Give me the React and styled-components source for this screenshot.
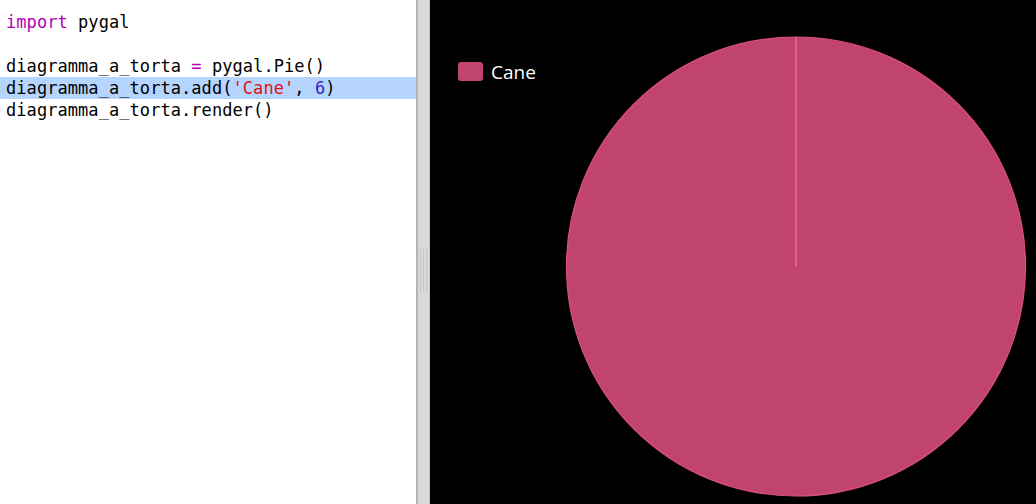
import React from "react";
import styled, { createGlobalStyle } from "styled-components";

const Global = createGlobalStyle`
  html, body { margin: 0; padding: 0; background: #fff; }
  body { width: 1036px; height: 504px; overflow: hidden; }
`;

const Layout = styled.div`
  display: flex;
  width: 1036px;
  height: 504px;
`;

const Editor = styled.div`
  width: 416px;
  flex: none;
  background: #fff;
  padding-top: 11px;
  box-sizing: border-box;
  font-family: "DejaVu Sans Mono", "Liberation Mono", monospace;
  font-size: 17px;
  letter-spacing: 0.06px;
  color: #000;
`;

const Line = styled.div`
  height: 22px;
  line-height: 22px;
  padding-left: 6px;
  white-space: pre;
  background: ${(p) => (p.$active ? "#b5d5ff" : "transparent")};
`;

const Kw = styled.span`color: #b400b4;`;
const Str = styled.span`color: #dd1111;`;
const Num = styled.span`color: #3a1fc0;`;

const Divider = styled.div`
  width: 14px;
  flex: none;
  box-sizing: border-box;
  background: #d9d9d9;
  border-left: 2px solid #b4b4b4;
  border-right: 1px solid #c4c4c4;
  display: flex;
  align-items: center;
  justify-content: center;
`;

const Grip = styled.div`
  width: 8px;
  height: 42px;
  margin-top: 36px;
  background: repeating-linear-gradient(
    to right,
    #c4c4c4 0px,
    #c4c4c4 1px,
    #d9d9d9 1px,
    #d9d9d9 3px
  );
`;

const Chart = styled.div`
  flex: 1;
  background: #000;
  display: flex;
`;

const ChartSvg = styled.svg`
  display: block;
  width: 606px;
  height: 504px;
`;

const LegendText = styled.text`
  font-family: "Open Sans", "DejaVu Sans", sans-serif;
  font-size: 19px;
  fill: #fff;
`;

export default function App() {
  const cx = 796 - 430;
  const cy = 266.5;
  const r = 229.5;
  return (
    <>
      <Global />
      <Layout>
        <Editor>
          <Line><Kw>import</Kw> pygal</Line>
          <Line> </Line>
          <Line>diagramma_a_torta <Kw>=</Kw> pygal.Pie()</Line>
          <Line $active>diagramma_a_torta.add(<Str>'Cane'</Str>, <Num>6</Num>)</Line>
          <Line>diagramma_a_torta.render()</Line>
        </Editor>
        <Divider>
          <Grip />
        </Divider>
        <Chart>
          <ChartSvg viewBox="0 0 606 504">
            <circle cx={cx} cy={cy} r={r} fill="#c0446f" stroke="#dd4e80" strokeWidth="1.2" />
            <line x1={cx} y1={cy} x2={cx} y2={cy - r} stroke="#ee5c90" strokeWidth="1.8" />
            <rect x="28" y="62" width="25" height="19" rx="3" fill="#c0446f" />
            <LegendText x="61" y="79">Cane</LegendText>
          </ChartSvg>
        </Chart>
      </Layout>
    </>
  );
}
